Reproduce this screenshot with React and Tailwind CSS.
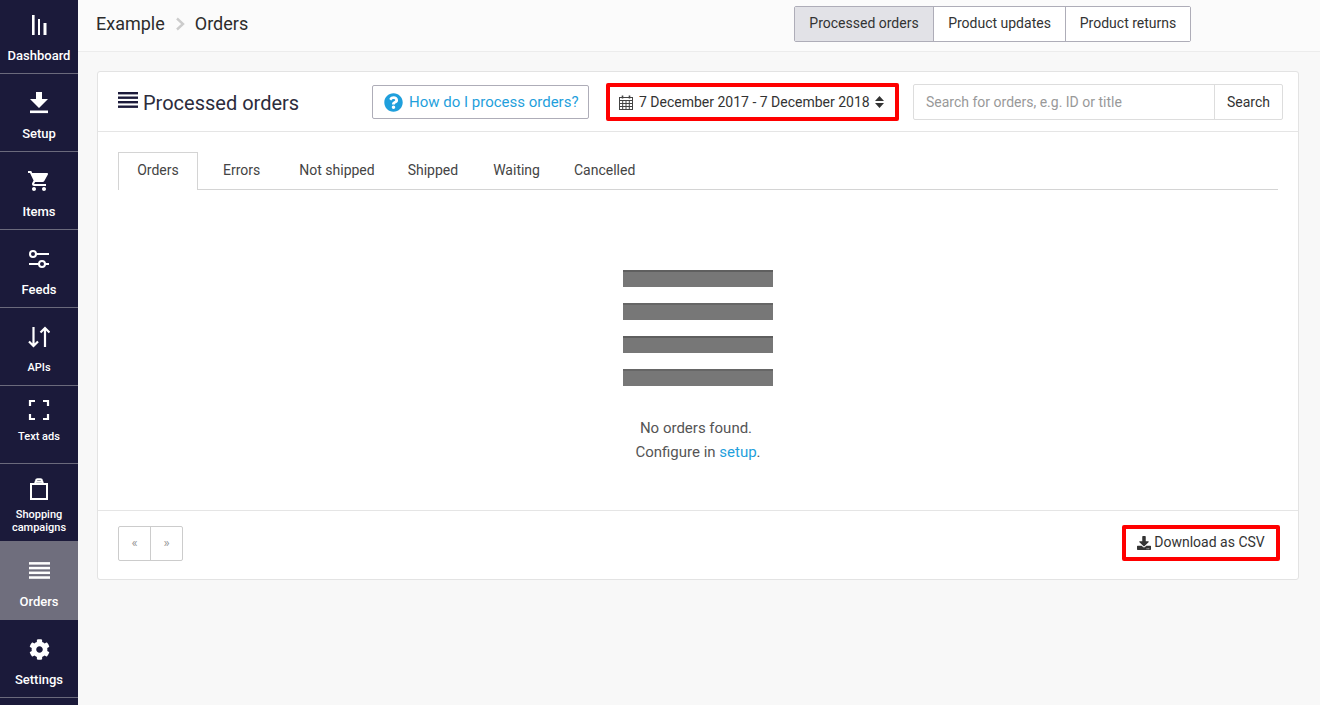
import React from 'react';
import { FaQuestionCircle, FaCog, FaDownload } from 'react-icons/fa';

const DashboardIcon = () => (
  <svg width="22" height="22" viewBox="0 0 22 22" fill="currentColor">
    <rect x="4" y="1" width="2.6" height="20" />
    <rect x="10" y="5" width="2" height="16" />
    <rect x="15.5" y="9" width="3" height="12" />
  </svg>
);

const SetupIcon = () => (
  <svg width="22" height="22" viewBox="0 0 22 22" fill="currentColor">
    <path d="M8 0h6v7h6l-9 9-9-9h6z" />
    <rect x="2" y="18.5" width="18" height="2.6" />
  </svg>
);

const CartIcon = () => (
  <svg width="24" height="24" viewBox="0 0 24 24" fill="currentColor">
    <path d="M7 18c-1.1 0-1.99.9-1.99 2S5.9 22 7 22s2-.9 2-2-.9-2-2-2zM1 2v2h2l3.6 7.59-1.35 2.45c-.16.28-.25.61-.25.96 0 1.1.9 2 2 2h12v-2H7.42c-.14 0-.25-.11-.25-.25l.03-.12.9-1.63h7.45c.75 0 1.41-.41 1.75-1.03l3.58-6.49c.08-.14.12-.31.12-.48 0-.55-.45-1-1-1H5.21l-.94-2H1zm16 16c-1.1 0-1.99.9-1.99 2s.89 2 1.99 2 2-.9 2-2-.9-2-2-2z" />
  </svg>
);

const FeedsIcon = () => (
  <svg width="22" height="22" viewBox="0 0 22 22" fill="none" stroke="currentColor" strokeWidth="2">
    <circle cx="5" cy="6" r="3" />
    <path d="M8 6h13M1 16h10" />
    <circle cx="14" cy="16" r="3" />
    <path d="M17 16h4" />
  </svg>
);

const ApisIcon = () => (
  <svg width="22" height="24" viewBox="0 0 22 24" fill="none" stroke="currentColor" strokeWidth="2.2">
    <path d="M5.5 2v19M1 16.5l4.5 4.5 4.5-4.5" />
    <path d="M17 22V3M12.5 7.5L17 3l4.5 4.5" />
  </svg>
);

const TextAdsIcon = () => (
  <svg width="22" height="22" viewBox="0 0 22 22" fill="none" stroke="currentColor" strokeWidth="2.2">
    <path d="M2 7V2h5M15 2h5v5M2 15v5h5M15 20h5v-5" />
  </svg>
);

const BagIcon = () => (
  <svg width="20" height="22" viewBox="0 0 20 22" fill="none" stroke="currentColor" strokeWidth="2">
    <rect x="2" y="6" width="16" height="15" />
    <path d="M6 6l1-3.5a1.5 1.5 0 0 1 1.5-1.2h3a1.5 1.5 0 0 1 1.5 1.2L14 6M6.5 3.8h7" />
  </svg>
);

const BarsIcon = ({ className }) => (
  <svg className={className} viewBox="0 0 20 16" fill="currentColor">
    <rect y="0" width="20" height="2.4" />
    <rect y="4.5" width="20" height="2.4" />
    <rect y="9" width="20" height="2.4" />
    <rect y="13.5" width="20" height="2.4" />
  </svg>
);

const CalendarIcon = () => (
  <svg className="mr-[6px] text-[#444]" width="14" height="15" viewBox="0 0 14 15" fill="none" stroke="currentColor" strokeWidth="1">
    <rect x="0.5" y="2.5" width="13" height="12" />
    <path d="M0.5 5.5h13M0.5 8.5h13M0.5 11.5h13M3.7 5.5v9M7 5.5v9M10.3 5.5v9" />
    <path d="M3.5 0.5v3M10.5 0.5v3" strokeWidth="1.6" />
  </svg>
);

const SortIcon = () => (
  <svg className="ml-[5px] text-[#333]" width="9" height="12" viewBox="0 0 9 12" fill="currentColor">
    <path d="M4.5 0L9 5H0zM0 7h9l-4.5 5z" />
  </svg>
);

const navItems = [
  { label: 'Dashboard', icon: <DashboardIcon />, box: 'h-[78px] pt-[17px] border-b border-[#6b6a7c]', text: 'text-[13px] mt-[12px]' },
  { label: 'Setup', icon: <SetupIcon />, box: 'h-[78px] pt-[17px] border-b border-[#6b6a7c]', text: 'text-[13px] mt-[12px]' },
  { label: 'Items', icon: <CartIcon />, box: 'h-[78px] pt-[17px] border-b border-[#6b6a7c]', text: 'text-[13px] mt-[12px]' },
  { label: 'Feeds', icon: <FeedsIcon />, box: 'h-[78px] pt-[17px] border-b border-[#6b6a7c]', text: 'text-[13px] mt-[12px]' },
  { label: 'APIs', icon: <ApisIcon />, box: 'h-[78px] pt-[17px] border-b border-[#6b6a7c]', text: 'text-[11px] mt-[12px]' },
  { label: 'Text ads', icon: <TextAdsIcon />, box: 'h-[78px] pt-[12px] border-b border-[#6b6a7c]', text: 'text-[11px] mt-[8px]' },
  { label: 'Shopping campaigns', icon: <BagIcon />, box: 'h-[77px] pt-[13px]', text: 'text-[11px] mt-[7px] w-[70px]' },
  { label: 'Orders', icon: <BarsIcon className="w-[21px] h-[17px]" />, box: 'h-[79px] pt-[17px] bg-[#6f6e7d]', text: 'text-[13px] mt-[13px]' },
  { label: 'Settings', icon: <FaCog size={21} />, box: 'h-[78px] pt-[17px] border-b border-[#6b6a7c]', text: 'text-[13px] mt-[12px]' },
];

function NavItem({ item }) {
  return (
    <div className={`flex flex-col items-center text-white ${item.box}`}>
      <div className="h-[24px] flex items-center justify-center">{item.icon}</div>
      <div className={`${item.text} text-center font-medium leading-[13px]`}>{item.label}</div>
    </div>
  );
}

const tabs = [
  { label: 'Errors', cls: 'pl-[25px] pr-[39px]' },
  { label: 'Not shipped', cls: 'pr-[33px]' },
  { label: 'Shipped', cls: 'pr-[35px]' },
  { label: 'Waiting', cls: 'pr-[34px]' },
  { label: 'Cancelled', cls: '' },
];

export default function App() {
  return (
    <div className="flex h-[705px] overflow-hidden bg-[#f8f8f8] text-[#333] font-['Roboto',sans-serif]">
      <aside className="w-[78px] shrink-0 bg-[#1b1a3a] -mt-[4px] h-[709px]">
        {navItems.map((item) => <NavItem key={item.label} item={item} />)}
      </aside>

      <main className="flex-1 min-w-0">
        <header className="h-[52px] flex items-center bg-[#fbfbfb] border-b border-[#ececec] pl-[18px] pr-[129px]">
          <div className="flex items-center text-[18px] text-[#2c2c2c] -mt-[4px]">
            <span>Example</span>
            <svg className="mx-[10px] text-[#cccccc]" width="10" height="14" viewBox="0 0 10 14" fill="none" stroke="currentColor" strokeWidth="2.4">
              <path d="M2 1.5L8 7l-6 5.5" />
            </svg>
            <span>Orders</span>
          </div>
          <div className="ml-auto flex h-[36px] text-[14px] text-[#333] border border-[#aeadb8] rounded-[2px] -mt-[3px]">
            <div className="w-[139px] pb-[1px] flex items-center justify-center bg-[#e2e2e7] border-r border-[#aeadb8]">Processed orders</div>
            <div className="w-[132px] pb-[1px] flex items-center justify-center bg-white border-r border-[#aeadb8]">Product updates</div>
            <div className="w-[124px] pb-[1px] flex items-center justify-center bg-white">Product returns</div>
          </div>
        </header>

        <section className="ml-[19px] mr-[21px] mt-[19px] h-[509px] bg-white border border-[#e3e3e3] rounded-[3px] flex flex-col">
          <div className="h-[60px] shrink-0 flex items-center border-b border-[#e5e5e5] pl-[20px] pr-[15px] pt-[1px]">
            <BarsIcon className="w-[20px] h-[16px] text-[#1b1a3a] mr-[5px] -mt-[5px]" />
            <h1 className="text-[20px] text-[#2c2c3c] w-[229px] pt-[2px]">Processed orders</h1>
            <button className="w-[217px] h-[34px] flex items-center border border-[#aeadb8] rounded-[2px] pl-[11px] text-[15px] text-[#1f9fdc]">
              <FaQuestionCircle size={19} className="mr-[6px]" />
              How do I process orders?
            </button>
            <div className="ml-[17px] w-[293px] h-[38px] flex items-center border-[4px] border-[#ff0000] rounded-[2px] pl-[9px] text-[14px] text-[#333]">
              <CalendarIcon />
              7 December 2017 - 7 December 2018
              <SortIcon />
            </div>
            <div className="ml-[14px] flex-1 h-[36px] flex border border-[#dddddd] rounded-[2px] text-[14px]">
              <div className="flex-1 flex items-center pl-[12px] text-[#999]">Search for orders, e.g. ID or title</div>
              <div className="w-[68px] flex items-center justify-center border-l border-[#dddddd] text-[#333]">Search</div>
            </div>
          </div>

          <div className="flex-1 px-[20px] pt-[20px]">
            <div className="flex h-[38px] border-b border-[#d4d4d4] text-[14px] text-[#444]">
              <div className="w-[80px] h-[38px] pb-[2px] flex items-center justify-center bg-white border border-b-0 border-[#d4d4d4]">Orders</div>
              {tabs.map((t) => (
                <div key={t.label} className={`h-[37px] flex items-center ${t.cls}`}>{t.label}</div>
              ))}
            </div>
            <div className="flex flex-col items-center pt-[80px] -ml-[1px]">
              <div className="flex flex-col gap-[16px] w-[150px]">
                <div className="h-[17px] bg-[#777777] border-t-2 border-[#5f5f5f]" />
                <div className="h-[17px] bg-[#777777] border-t-2 border-[#666666]" />
                <div className="h-[17px] bg-[#777777] border-t-2 border-[#5f5f5f]" />
                <div className="h-[17px] bg-[#777777] border-t-2 border-[#666666]" />
              </div>
              <div className="mt-[30px] pr-[3px] text-[15px] leading-[24px] text-[#555] text-center">
                <p>No orders found.</p>
                <p className="pl-[4px]">Configure in <span className="text-[#1f9fdc]">setup</span>.</p>
              </div>
            </div>
          </div>

          <div className="h-[69px] shrink-0 flex items-center justify-between border-t border-[#e5e5e5] pl-[20px] pr-[18px] pb-[4px]">
            <div className="flex h-[35px] border border-[#cccccc] rounded-[2px] text-[13px] text-[#999]">
              <div className="w-[32px] flex items-center justify-center border-r border-[#cccccc]">«</div>
              <div className="w-[31px] flex items-center justify-center">»</div>
            </div>
            <div className="w-[158px] h-[36px] pb-[1px] flex items-center justify-center border-[4px] border-[#ff0000] rounded-[2px] text-[14px] text-[#333]">
              <FaDownload size={14} className="mr-[3px]" />
              Download as CSV
            </div>
          </div>
        </section>
      </main>
    </div>
  );
}
